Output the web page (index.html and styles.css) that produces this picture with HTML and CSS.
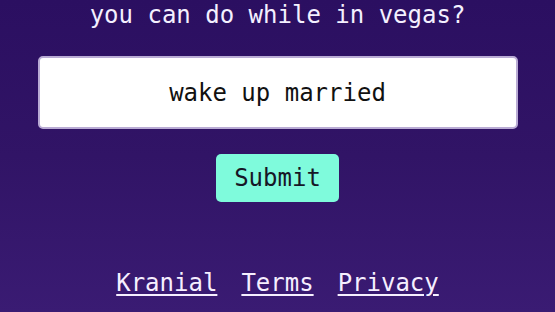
FILE: index.html
```html
<!DOCTYPE html>
<html lang="en">
<head>
<meta charset="utf-8">
<link rel="stylesheet" href="styles.css">
</head>
<body>
<main class="page">
  <h1 class="question">you can do while in vegas?</h1>
  <div class="answer">wake up married</div>
  <button class="submit" type="button">Submit</button>
  <nav class="footer">
    <a href="#">Kranial</a>
    <a href="#">Terms</a>
    <a href="#">Privacy</a>
  </nav>
</main>
</body>
</html>
```
FILE: styles.css
```css
html, body {
  margin: 0;
  height: 100%;
}
body {
  background: linear-gradient(180deg, #2b0f61 0%, #311466 50%, #3a1b73 100%);
  font-family: "DejaVu Sans Mono", "Liberation Mono", monospace;
  color: #ffffff;
}
.page {
  display: flex;
  flex-direction: column;
  align-items: center;
}
.question {
  margin: 0;
  font-size: 24px;
  font-weight: normal;
  line-height: 31px;
  color: #f4f0ff;
}
.answer {
  margin-top: 25px;
  box-sizing: border-box;
  width: 480px;
  height: 73px;
  background: #ffffff;
  border: 2px solid #b9abd4;
  border-radius: 5px;
  display: flex;
  align-items: center;
  justify-content: center;
  font-size: 24px;
  color: #111111;
}
.submit {
  margin-top: 25px;
  width: 123px;
  height: 48px;
  background: #7ffbdc;
  border: none;
  border-radius: 5px;
  font-family: inherit;
  font-size: 24px;
  color: #161626;
  padding: 0;
}
.footer {
  margin-top: 67px;
  display: flex;
  gap: 24px;
  font-size: 24px;
  line-height: 28px;
}
.footer a {
  color: #f6efff;
  text-decoration: underline;
  text-decoration-thickness: 2px;
  text-underline-offset: 3px;
}
```
